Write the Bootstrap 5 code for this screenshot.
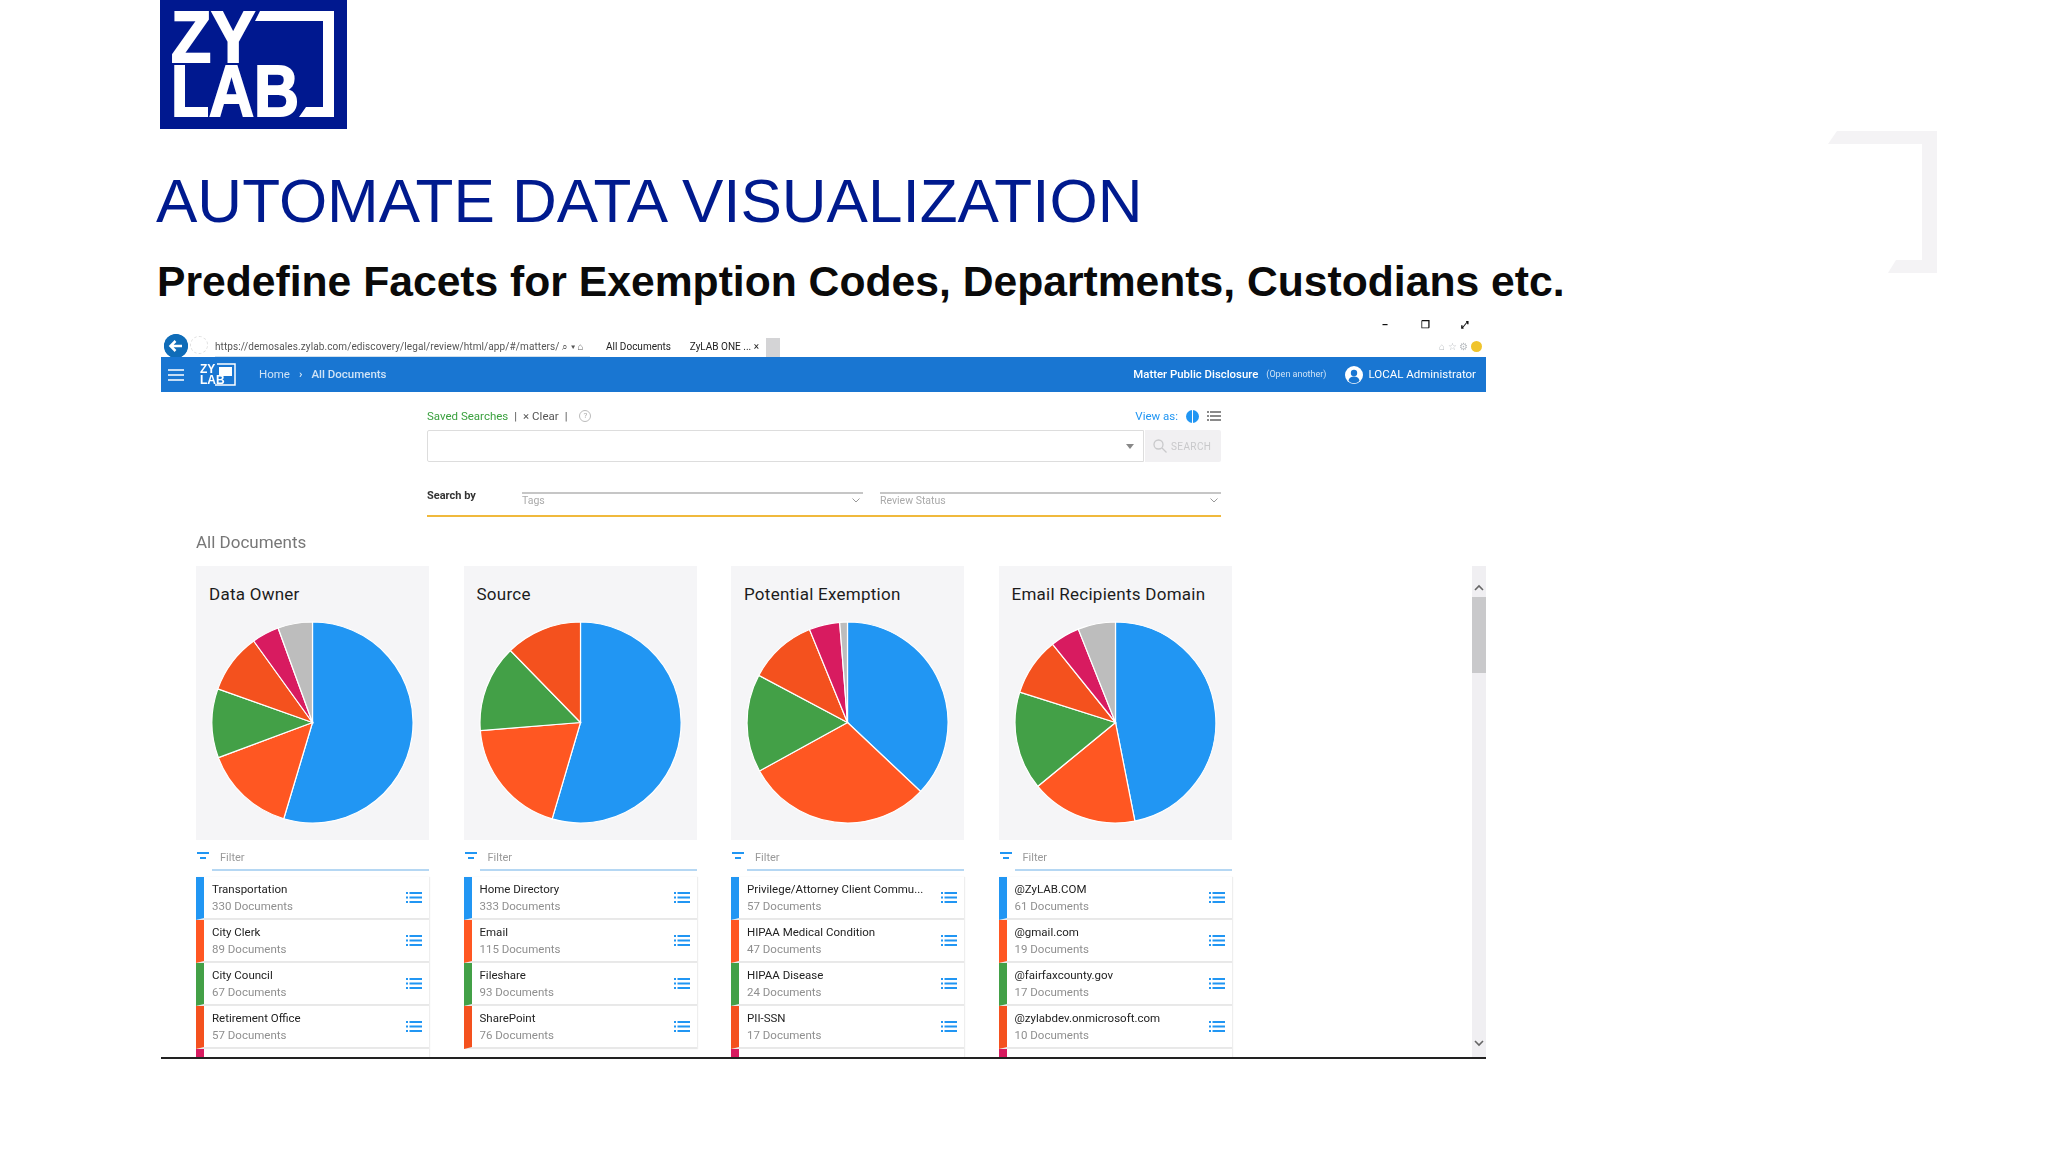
<!DOCTYPE html>
<html lang="en">
<head>
<meta charset="utf-8">
<title>Automate Data Visualization</title>
<link rel="stylesheet" href="https://cdn.jsdelivr.net/npm/bootstrap@5.3.0/dist/css/bootstrap.min.css">
<style>
html,body{margin:0;background:#fff;height:1152px;overflow:hidden}
.slide{position:relative;width:2048px;height:1152px;padding-left:156px;font-family:"Liberation Sans",Arial,sans-serif}
.wmark{position:absolute;left:1828px;top:131px;width:109px;height:142px}
.zlogo{display:block;width:187px;height:129px;margin-left:4px;overflow:visible}
.ztext{font-family:"Liberation Sans",Arial,sans-serif;font-weight:700;fill:#fff;stroke:#fff;stroke-width:2px;font-size:72px}
.stitle{margin:0;font-size:62px;line-height:70px;color:#001a8e;font-weight:400;padding-top:37px;white-space:nowrap}
.ssub{margin:0 0 0 1px;font-size:42.65px;line-height:48px;color:#0a0a0a;font-weight:700;padding-top:21px;white-space:nowrap}
.appshot{width:1325px;margin-left:5px;margin-top:14px;height:742px;font-family:Roboto,"Liberation Sans",sans-serif;color:#444;filter:blur(.5px);overflow:hidden}
.winbtns{height:14px;padding-right:16px;gap:30px;font-size:10px;line-height:12px;color:#111;font-weight:700}
.winbtns span{width:10px;text-align:center}
.urlrow{height:24px;font-size:10px;line-height:27px;white-space:nowrap;color:#555}
.backc{width:24px;height:24px;border-radius:50%;background:#0f6cb8;margin-left:3px;margin-top:1px;flex:none;display:block}
.fwdc{width:18px;height:18px;border-radius:50%;border:1px dashed #ddd;margin:3px 0 0 2px;flex:none}
.urltxt{width:375px;margin-left:7px;flex:none;letter-spacing:.01em;overflow:hidden;border-bottom:1px solid #cfe0ee;height:24px}
.tabt{margin-left:16px;color:#222;flex:none;width:153px;gap:10px}
.tabgap{width:14px;height:19px;background:#d4d4d6;margin-top:5px;flex:none;margin-left:7px}
.smile{width:11px;height:11px;border-radius:50%;background:#f0c42c;display:block;margin:8px 4px 0 3px}
.topbar{height:35px;padding:0 10px 0 7px;background:#1976d2;color:#fff;font-size:11.5px;flex-wrap:nowrap;justify-content:flex-start}
.burger{width:16px;height:12px;margin-right:15px}
.tlogo{width:37px;height:23px;margin-right:23px}
.crumb{margin:0;--bs-breadcrumb-divider-color:#dcecfa;--bs-breadcrumb-item-active-color:#fff;--bs-breadcrumb-item-padding-x:9px;--bs-breadcrumb-divider:'›';font-size:11.5px}
.crumb .breadcrumb-item{color:#cfe3f6}
.crumb .breadcrumb-item.active{font-weight:500}
.matter{font-weight:500;font-size:11.4px}
.opened{font-size:9px;color:#cfe3f6;margin:0 19px 0 8px}
.avatar{width:18px;height:18px;margin-right:5px}
.search{width:794px;margin-left:266px;padding-top:16px}
.sline{height:16px;font-size:11.5px;line-height:16px;color:#555}
.slsep{margin:0 6px}
.savedl{color:#3aa03e}
.viewl{color:#2196f3}
.qmark{display:inline-block;width:12px;height:12px;border:1px solid #bbb;border-radius:50%;font-size:8px;line-height:10px;text-align:center;color:#aaa;margin-left:6px}
.qrow{margin-top:6px;height:32px}
.qbox{flex:1;border:1px solid #ddd;border-radius:2px 0 0 2px;height:32px}
.qcaret{width:0;height:0;border:4px solid transparent;border-top:5px solid #888;border-bottom:0;margin-right:9px}
.qbtn{width:76px;margin-left:1px;background:#f1f0f2;color:#c9c9cb;font-size:10px;letter-spacing:.04em;border-radius:0 2px 2px 0;--bs-btn-padding-x:8px;--bs-btn-padding-y:0;--bs-btn-border-width:0;height:32px}
.byrow{margin-top:30px;height:25px;border-bottom:2px solid #f0b93c;font-size:10.5px}
.bylabel{width:95px;font-weight:700;font-size:11px;color:#333;line-height:8px}
.bysel{flex:1;border-top:2px solid #c6c6c6;color:#aaa;line-height:14px;padding-right:3px}
.bysel+.bysel{margin-left:17px}
.chev{width:8px;height:5px;margin-top:4px}
.alld{font-size:17px;line-height:20px;margin:15px 0 14px 35px;color:#777}
.results{height:493px;overflow:hidden;border-bottom:2px solid #222}
.cols{padding-left:35px;gap:34.500px;flex:1}
.colz{width:233px;flex:none}
.pcard{background:#f5f5f7;border:0;border-radius:0;height:274px;padding:18px 0 0 13px;--bs-card-bg:#f5f5f7}
.ptitle{font-size:17px;line-height:20px;color:#1c1c1c;font-weight:400;white-space:nowrap;height:20px;letter-spacing:.015em}
.piesvg{display:block;width:203px;height:203px;margin:17px 0 0 2px}
.frow{height:31px;margin-bottom:6px;padding-left:1px}
.ficon{width:12px;height:8px;margin:0 2px 0 0;flex:none}
.finput{flex:1;margin-left:1px;border-bottom:2px solid #b5d7f3;font-size:11px;color:#999;height:31px;line-height:35px;padding-left:8px}
.rlist{--bs-list-group-border-radius:0;--bs-list-group-border-width:0}
.ritem{height:43px;padding:0 7px 0 8px;border:0;border-left:8px solid #2196f3;border-bottom:2px solid #e8e8e8;display:flex;align-items:center;box-shadow:1px 0 1px #eee}
.rtxt{flex:1;min-width:0;overflow:hidden;white-space:nowrap}
.rname{font-size:11.5px;line-height:15px;color:#222;overflow:hidden;text-overflow:ellipsis;height:15px}
.rsub{font-size:11.5px;line-height:15px;color:#8f8f8f;margin-top:2px}
.licon{width:16px;height:13px;flex:none;margin-left:4px}
.c-b{border-left-color:#2196f3}.c-o{border-left-color:#ff5722}.c-g{border-left-color:#43a047}.c-d{border-left-color:#f4511e}.c-p{border-left-color:#d81b60}
.sbar{width:14px;flex:none;background:#f0eff2;padding-top:18px}
.sarrow{display:block;width:10px;height:7px;margin:0 auto}
.sthumb{height:76px;background:#c9c9cb;margin:6px 0 0}
.sdown{margin-top:auto;margin-bottom:10px}
</style>
</head>
<body>
<svg width="0" height="0" class="d-block" aria-hidden="true">
<defs>
<symbol id="ilist" viewBox="0 0 16 13"><g fill="#2196f3"><rect x="0" y="1" width="2" height="2"/><rect x="0" y="5.5" width="2" height="2"/><rect x="0" y="10" width="2" height="2"/><rect x="3.5" y="1" width="12.5" height="2"/><rect x="3.5" y="5.5" width="12.5" height="2"/><rect x="3.5" y="10" width="12.5" height="2"/></g></symbol>
<symbol id="ifilt" viewBox="0 0 12 8"><g fill="#2196f3"><rect x="0" y="0" width="12" height="2"/><rect x="3" y="5" width="6" height="2"/></g></symbol>
<symbol id="ichev" viewBox="0 0 8 5"><path d="M.5.5 4 4 7.5.5" fill="none" stroke="#999" stroke-width="1"/></symbol>
</defs>
</svg>
<div class="slide">
  <svg class="wmark" viewBox="0 0 109 142" aria-hidden="true"><polygon points="9,0 109,0 109,142 60,142 68,129 94,129 94,13 0,13" fill="#f4f3f5"/></svg>

  <svg class="zlogo" viewBox="0 0 187 129" role="img" aria-label="ZyLAB">
    <rect width="187" height="129" fill="#00188f"/>
    <text class="ztext" x="11" y="62" textLength="84" lengthAdjust="spacingAndGlyphs">ZY</text>
    <text class="ztext" x="11" y="116" textLength="128" lengthAdjust="spacingAndGlyphs">LAB</text>
    <polygon points="100,11 174,11 174,117 139,117 146,107 163,107 163,21 95,21" fill="#fff"/>
  </svg>
  <h1 class="stitle">AUTOMATE DATA VISUALIZATION</h1>
  <h2 class="ssub">Predefine Facets for Exemption Codes, Departments, Custodians etc.</h2>

  <section class="appshot">
    <div class="winbtns d-flex justify-content-end"><span>–</span><span>❐</span><span>⤢</span></div>
    <div class="urlrow d-flex">
      <svg class="backc" viewBox="0 0 24 24" aria-hidden="true"><circle cx="12" cy="12" r="12" fill="#0f6cb8"/><path d="M18 12H7M11.500 7 6.500 12l5 5" fill="none" stroke="#fff" stroke-width="2.500"/></svg>
      <span class="fwdc"></span>
      <span class="urltxt">https://demosales.zylab.com/ediscovery/legal/review/html/app/#/matters/ ⌕ ▾ ⌂</span>
      <span class="tabt d-flex justify-content-between"><span>All Documents</span><span>ZyLAB ONE ... ×</span></span>
      <span class="tabgap"></span>
      <span class="ms-auto d-flex"><span class="text-secondary opacity-50">⌂ ☆ ⚙</span><span class="smile"></span></span>
    </div>
    <nav class="navbar topbar">
      <svg class="burger" viewBox="0 0 16 12" aria-hidden="true"><path d="M0 1h16M0 6h16M0 11h16" stroke="#fff" stroke-width="1.500"/></svg>
      <svg class="tlogo" viewBox="0 0 37 23" role="img" aria-label="ZyLAB ONE">
        <path d="M18 1h18v21H16" fill="none" stroke="#fff" stroke-width="1.500"/>
        <text x="1" y="10" font-size="12" font-weight="700" fill="#fff" font-family="Liberation Sans">ZY</text>
        <text x="1" y="21" font-size="12" font-weight="700" fill="#fff" font-family="Liberation Sans">LAB</text>
        <rect x="20" y="4" width="13" height="9" fill="#fff"/>
      </svg>
      <ol class="breadcrumb crumb">
        <li class="breadcrumb-item">Home</li>
        <li class="breadcrumb-item active">All Documents</li>
      </ol>
      <span class="matter ms-auto">Matter Public Disclosure</span>
      <span class="opened">(Open another)</span>
      <svg class="avatar" viewBox="0 0 18 18" aria-hidden="true"><circle cx="9" cy="9" r="9" fill="#fff"/><circle cx="9" cy="7" r="3.200" fill="#1976d2"/><path d="M3.500 15c.5-3.500 3-4.500 5.500-4.500s5 1 5.500 4.500a8 8 0 0 1-11 0z" fill="#1976d2"/></svg>
      <span>LOCAL Administrator</span>
    </nav>

    <div class="search">
      <div class="sline d-flex align-items-center">
        <span class="savedl">Saved Searches</span><span class="slsep">|</span><span>× Clear</span><span class="slsep">|</span><span class="qmark">?</span>
        <span class="viewl ms-auto">View as:</span>
        <svg class="ms-2" width="13" height="13" viewBox="0 0 13 13" aria-hidden="true"><circle cx="6.500" cy="6.500" r="6.500" fill="#2196f3"/><path d="M6.500 0v13" stroke="#fff"/></svg>
        <svg class="ms-2" width="14" height="11" viewBox="0 0 14 11" aria-hidden="true"><g fill="#8a8a8a"><rect width="2" height="2"/><rect y="4" width="2" height="2"/><rect y="8" width="2" height="2"/><rect x="3" width="11" height="2"/><rect x="3" y="4" width="11" height="2"/><rect x="3" y="8" width="11" height="2"/></g></svg>
      </div>
      <div class="qrow d-flex">
        <div class="qbox d-flex align-items-center justify-content-end"><span class="qcaret"></span></div>
        <button type="button" class="btn qbtn d-flex align-items-center gap-1 p-0 ps-2">
          <svg width="14" height="14" viewBox="0 0 14 14" aria-hidden="true"><circle cx="5.500" cy="5.500" r="4.500" fill="none" stroke="#c9c9cb" stroke-width="1.300"/><path d="M9 9l4.500 4.500" stroke="#c9c9cb" stroke-width="1.300"/></svg>SEARCH
        </button>
      </div>
      <div class="byrow d-flex">
        <span class="bylabel">Search by</span>
        <div class="bysel d-flex justify-content-between align-items-start"><span>Tags</span><svg class="chev"><use href="#ichev"/></svg></div>
        <div class="bysel d-flex justify-content-between align-items-start"><span>Review Status</span><svg class="chev"><use href="#ichev"/></svg></div>
      </div>
    </div>

    <div class="alld">All Documents</div>

    <div class="results d-flex">
      <div class="cols d-flex">

        <div class="colz">
          <div class="card pcard">
            <div class="ptitle">Data Owner</div>
            <svg class="piesvg" viewBox="-101 -101 202 202" aria-hidden="true"><g stroke="#fff" stroke-width="1.200">
              <path d="M0 0V-100A100 100 0 1 1 -28.600 95.800Z" fill="#2196f3"/>
              <path d="M0 0L-28.600 95.800A100 100 0 0 1 -93.700 35Z" fill="#ff5722"/>
              <path d="M0 0L-93.700 35A100 100 0 0 1 -94.200 -33.500Z" fill="#43a047"/>
              <path d="M0 0L-94.200 -33.500A100 100 0 0 1 -58.500 -81.100Z" fill="#f4511e"/>
              <path d="M0 0L-58.500 -81.100A100 100 0 0 1 -34.200 -94Z" fill="#d81b60"/>
              <path d="M0 0L-34.200 -94A100 100 0 0 1 0 -100Z" fill="#bdbdbd"/>
            </g></svg>
          </div>
          <div class="frow d-flex align-items-center"><svg class="ficon"><use href="#ifilt"/></svg><div class="finput">Filter</div></div>
          <div class="list-group rlist">
            <div class="list-group-item ritem c-b"><div class="rtxt"><div class="rname">Transportation</div><div class="rsub">330 Documents</div></div><svg class="licon"><use href="#ilist"/></svg></div>
            <div class="list-group-item ritem c-o"><div class="rtxt"><div class="rname">City Clerk</div><div class="rsub">89 Documents</div></div><svg class="licon"><use href="#ilist"/></svg></div>
            <div class="list-group-item ritem c-g"><div class="rtxt"><div class="rname">City Council</div><div class="rsub">67 Documents</div></div><svg class="licon"><use href="#ilist"/></svg></div>
            <div class="list-group-item ritem c-d"><div class="rtxt"><div class="rname">Retirement Office</div><div class="rsub">57 Documents</div></div><svg class="licon"><use href="#ilist"/></svg></div>
            <div class="list-group-item ritem c-p"><div class="rtxt"></div></div>
          </div>
        </div>

        <div class="colz">
          <div class="card pcard">
            <div class="ptitle">Source</div>
            <svg class="piesvg" viewBox="-101 -101 202 202" aria-hidden="true"><g stroke="#fff" stroke-width="1.200">
              <path d="M0 0V-100A100 100 0 1 1 -28.200 95.900Z" fill="#2196f3"/>
              <path d="M0 0L-28.200 95.900A100 100 0 0 1 -99.700 8Z" fill="#ff5722"/>
              <path d="M0 0L-99.700 8A100 100 0 0 1 -69.800 -71.600Z" fill="#43a047"/>
              <path d="M0 0L-69.800 -71.600A100 100 0 0 1 0 -100Z" fill="#f4511e"/>
            </g></svg>
          </div>
          <div class="frow d-flex align-items-center"><svg class="ficon"><use href="#ifilt"/></svg><div class="finput">Filter</div></div>
          <div class="list-group rlist">
            <div class="list-group-item ritem c-b"><div class="rtxt"><div class="rname">Home Directory</div><div class="rsub">333 Documents</div></div><svg class="licon"><use href="#ilist"/></svg></div>
            <div class="list-group-item ritem c-o"><div class="rtxt"><div class="rname">Email</div><div class="rsub">115 Documents</div></div><svg class="licon"><use href="#ilist"/></svg></div>
            <div class="list-group-item ritem c-g"><div class="rtxt"><div class="rname">Fileshare</div><div class="rsub">93 Documents</div></div><svg class="licon"><use href="#ilist"/></svg></div>
            <div class="list-group-item ritem c-d"><div class="rtxt"><div class="rname">SharePoint</div><div class="rsub">76 Documents</div></div><svg class="licon"><use href="#ilist"/></svg></div>
          </div>
        </div>

        <div class="colz">
          <div class="card pcard">
            <div class="ptitle">Potential Exemption</div>
            <svg class="piesvg" viewBox="-101 -101 202 202" aria-hidden="true"><g stroke="#fff" stroke-width="1.200">
              <path d="M0 0V-100A100 100 0 0 1 72.800 68.600Z" fill="#2196f3"/>
              <path d="M0 0L72.800 68.600A100 100 0 0 1 -87.600 48.200Z" fill="#ff5722"/>
              <path d="M0 0L-87.600 48.200A100 100 0 0 1 -88.300 -46.900Z" fill="#43a047"/>
              <path d="M0 0L-88.300 -46.900A100 100 0 0 1 -37.800 -92.600Z" fill="#f4511e"/>
              <path d="M0 0L-37.800 -92.600A100 100 0 0 1 -7.800 -99.700Z" fill="#d81b60"/>
              <path d="M0 0L-7.800 -99.700A100 100 0 0 1 0 -100Z" fill="#bdbdbd"/>
            </g></svg>
          </div>
          <div class="frow d-flex align-items-center"><svg class="ficon"><use href="#ifilt"/></svg><div class="finput">Filter</div></div>
          <div class="list-group rlist">
            <div class="list-group-item ritem c-b"><div class="rtxt"><div class="rname">Privilege/Attorney Client Commu...</div><div class="rsub">57 Documents</div></div><svg class="licon"><use href="#ilist"/></svg></div>
            <div class="list-group-item ritem c-o"><div class="rtxt"><div class="rname">HIPAA Medical Condition</div><div class="rsub">47 Documents</div></div><svg class="licon"><use href="#ilist"/></svg></div>
            <div class="list-group-item ritem c-g"><div class="rtxt"><div class="rname">HIPAA Disease</div><div class="rsub">24 Documents</div></div><svg class="licon"><use href="#ilist"/></svg></div>
            <div class="list-group-item ritem c-d"><div class="rtxt"><div class="rname">PII-SSN</div><div class="rsub">17 Documents</div></div><svg class="licon"><use href="#ilist"/></svg></div>
            <div class="list-group-item ritem c-p"><div class="rtxt"></div></div>
          </div>
        </div>

        <div class="colz">
          <div class="card pcard">
            <div class="ptitle">Email Recipients Domain</div>
            <svg class="piesvg" viewBox="-101 -101 202 202" aria-hidden="true"><g stroke="#fff" stroke-width="1.200">
              <path d="M0 0V-100A100 100 0 0 1 19.300 98.100Z" fill="#2196f3"/>
              <path d="M0 0L19.300 98.100A100 100 0 0 1 -77.300 63.500Z" fill="#ff5722"/>
              <path d="M0 0L-77.300 63.500A100 100 0 0 1 -95.300 -30.200Z" fill="#43a047"/>
              <path d="M0 0L-95.300 -30.200A100 100 0 0 1 -62.700 -77.900Z" fill="#f4511e"/>
              <path d="M0 0L-62.700 -77.900A100 100 0 0 1 -37 -92.900Z" fill="#d81b60"/>
              <path d="M0 0L-37 -92.900A100 100 0 0 1 0 -100Z" fill="#bdbdbd"/>
            </g></svg>
          </div>
          <div class="frow d-flex align-items-center"><svg class="ficon"><use href="#ifilt"/></svg><div class="finput">Filter</div></div>
          <div class="list-group rlist">
            <div class="list-group-item ritem c-b"><div class="rtxt"><div class="rname">@ZyLAB.COM</div><div class="rsub">61 Documents</div></div><svg class="licon"><use href="#ilist"/></svg></div>
            <div class="list-group-item ritem c-o"><div class="rtxt"><div class="rname">@gmail.com</div><div class="rsub">19 Documents</div></div><svg class="licon"><use href="#ilist"/></svg></div>
            <div class="list-group-item ritem c-g"><div class="rtxt"><div class="rname">@fairfaxcounty.gov</div><div class="rsub">17 Documents</div></div><svg class="licon"><use href="#ilist"/></svg></div>
            <div class="list-group-item ritem c-d"><div class="rtxt"><div class="rname">@zylabdev.onmicrosoft.com</div><div class="rsub">10 Documents</div></div><svg class="licon"><use href="#ilist"/></svg></div>
            <div class="list-group-item ritem c-p"><div class="rtxt"></div></div>
          </div>
        </div>

      </div>
      <div class="sbar d-flex flex-column">
        <svg class="sarrow" viewBox="0 0 10 7" aria-hidden="true"><path d="M1 6l4-4 4 4" fill="none" stroke="#666" stroke-width="1.600"/></svg>
        <div class="sthumb"></div>
        <svg class="sarrow sdown" viewBox="0 0 10 7" aria-hidden="true"><path d="M1 1l4 4 4-4" fill="none" stroke="#666" stroke-width="1.600"/></svg>
      </div>
    </div>
  </section>
</div>
<script src="https://cdn.jsdelivr.net/npm/bootstrap@5.3.0/dist/js/bootstrap.bundle.min.js"></script>
</body>
</html>
